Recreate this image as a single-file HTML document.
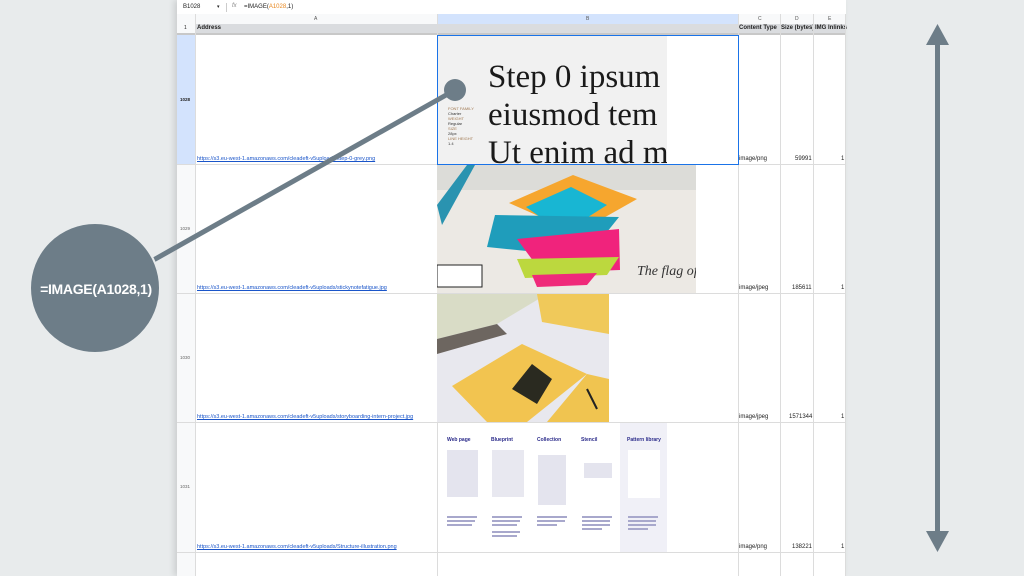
<!DOCTYPE html>
<html><head><meta charset="utf-8"><style>
*{margin:0;padding:0;box-sizing:border-box}
body{width:1024px;height:576px;overflow:hidden;background:#e8ebec;font-family:"Liberation Sans",sans-serif;position:relative}
.a{position:absolute}
.sheet{left:177px;top:0;width:669px;height:576px;background:#fff;box-shadow:-3px 0 6px rgba(0,0,0,.12)}
.t{font-size:6px;color:#222;white-space:nowrap}
.lnk{font-size:5.5px;color:#1a55c9;text-decoration:underline;white-space:nowrap}
.hl{background:#dadcdf}
.v{width:1px;background:#dcdcdc}
.h{height:1px;background:#dcdcdc}
.txt{height:2px;background:#a8a8cc}
</style></head><body>
<div class="a sheet"></div>
<div class="a t" style="left:183px;top:4px;font-size:6px">B1028</div>
<div class="a t" style="left:217px;top:4px;font-size:5px">▾</div>
<div class="a" style="left:226px;top:3px;width:1px;height:9px;background:#ccc"></div>
<div class="a t" style="left:232px;top:3px;font-size:6px;color:#888;font-style:italic">fx</div>
<div class="a t" style="left:244px;top:4px;font-size:6px">=IMAGE(<span style="color:#e8871e">A1028</span>,1)</div>
<div class="a h" style="left:177px;top:14px;width:669px"></div>
<div class="a" style="left:177px;top:14px;width:669px;height:10px;background:#f8f9fa"></div>
<div class="a" style="left:437px;top:14px;width:301px;height:10px;background:#d3e3fd"></div>
<div class="a t" style="left:314px;top:16px;font-size:5px;color:#555">A</div>
<div class="a t" style="left:586px;top:16px;font-size:5px;color:#555">B</div>
<div class="a t" style="left:758px;top:16px;font-size:5px;color:#555">C</div>
<div class="a t" style="left:795px;top:16px;font-size:5px;color:#555">D</div>
<div class="a t" style="left:828px;top:16px;font-size:5px;color:#555">E</div>
<div class="a hl" style="left:195px;top:24px;width:651px;height:9px"></div>
<div class="a" style="left:177px;top:24px;width:18px;height:9px;background:#f8f9fa"></div>
<div class="a t" style="left:184px;top:25px;font-size:5px">1</div>
<div class="a t" style="left:197px;top:25px;font-weight:bold">Address</div>
<div class="a t" style="left:739px;top:25px;font-weight:bold">Content Type</div>
<div class="a t" style="left:781px;top:25px;font-weight:bold">Size (bytes)</div>
<div class="a t" style="left:815px;top:25px;font-weight:bold">IMG Inlinks</div>
<div class="a" style="left:177px;top:33px;width:669px;height:2px;background:#c8c8c8"></div>
<div class="a" style="left:177px;top:35px;width:18px;height:541px;background:#f8f9fa"></div>
<div class="a" style="left:177px;top:35px;width:18px;height:129px;background:#d3e3fd"></div>
<div class="a t" style="left:180px;top:97px;font-size:4.5px;font-weight:bold">1028</div>
<div class="a t" style="left:180px;top:226px;font-size:4.5px;color:#666">1029</div>
<div class="a t" style="left:180px;top:355px;font-size:4.5px;color:#666">1030</div>
<div class="a t" style="left:180px;top:484px;font-size:4.5px;color:#666">1031</div>
<div class="a v" style="left:195px;top:14px;height:562px"></div>
<div class="a v" style="left:437px;top:14px;height:562px"></div>
<div class="a v" style="left:738px;top:14px;height:562px"></div>
<div class="a v" style="left:780px;top:14px;height:562px"></div>
<div class="a v" style="left:813px;top:14px;height:562px"></div>
<div class="a v" style="left:845px;top:14px;height:562px"></div>
<div class="a h" style="left:177px;top:164px;width:669px"></div>
<div class="a h" style="left:177px;top:293px;width:669px"></div>
<div class="a h" style="left:177px;top:422px;width:669px"></div>
<div class="a h" style="left:177px;top:552px;width:669px"></div>
<div class="a lnk" style="left:197px;top:156px">https://s3.eu-west-1.amazonaws.com/cleadeft-v5uploads/step-0-grey.png</div>
<div class="a lnk" style="left:197px;top:285px">https://s3.eu-west-1.amazonaws.com/cleadeft-v5uploads/stickynotefatigue.jpg</div>
<div class="a lnk" style="left:197px;top:414px">https://s3.eu-west-1.amazonaws.com/cleadeft-v5uploads/storyboarding-intern-project.jpg</div>
<div class="a lnk" style="left:197px;top:544px">https://s3.eu-west-1.amazonaws.com/cleadeft-v5uploads/Structure-illustration.png</div>
<div class="a t" style="left:739px;top:156px">image/png</div><div class="a t" style="left:795px;top:156px">59991</div><div class="a t" style="left:841px;top:156px">1</div>
<div class="a t" style="left:739px;top:285px">image/jpeg</div><div class="a t" style="left:792px;top:285px">185611</div><div class="a t" style="left:841px;top:285px">1</div>
<div class="a t" style="left:739px;top:414px">image/jpeg</div><div class="a t" style="left:789px;top:414px">1571344</div><div class="a t" style="left:841px;top:414px">1</div>
<div class="a t" style="left:739px;top:544px">image/png</div><div class="a t" style="left:792px;top:544px">138221</div><div class="a t" style="left:841px;top:544px">1</div>
<div class="a" style="left:438px;top:36px;width:229px;height:128px;background:#f1f1f1;overflow:hidden">
<div class="a" style="left:50px;top:22px;font-family:'Liberation Serif',serif;font-size:33px;line-height:38px;color:#1a1a1a;white-space:nowrap">Step 0 ipsum<br>eiusmod tem<br>Ut enim ad m</div>
<div class="a" style="left:10px;top:70px;font-size:4px;line-height:5px;color:#333">
<span style="color:#a07850">FONT FAMILY</span><br>Charter<br><span style="color:#a07850">WEIGHT</span><br>Regular<br><span style="color:#a07850">SIZE</span><br>28px<br><span style="color:#a07850">LINE HEIGHT</span><br>1.4</div>
</div>
<div class="a" style="left:437px;top:35px;width:302px;height:130px;border:1px solid #1a73e8"></div>
<svg class="a" style="left:437px;top:165px" width="259" height="128" viewBox="0 0 259 128">
<rect width="259" height="128" fill="#ece9e4"/>
<rect x="0" y="0" width="259" height="25" fill="#dcdcd8"/>
<path d="M0 40 L30 0 L38 0 L5 60Z" fill="#2a93b0"/>
<path d="M72 38 L136 10 L200 34 L140 68Z" fill="#f6a62e"/>
<path d="M89 42 L134 22 L170 40 L126 68Z" fill="#18b6d3"/>
<path d="M58 50 L182 52 L150 92 L50 82Z" fill="#1f9dbb"/>
<path d="M80 74 L182 64 L183 105 L105 108Z" fill="#f0237c"/>
<path d="M80 94 L182 92 L170 110 L88 113Z" fill="#bcd83e"/>
<path d="M95 110 L160 108 L150 120 L100 122Z" fill="#ef2a7a"/>
<rect x="0" y="100" width="45" height="22" fill="#fff" stroke="#222"/>
<text x="200" y="110" font-size="14" font-family="Liberation Serif" fill="#333" font-style="italic">The flag of</text>
</svg>
<svg class="a" style="left:437px;top:294px" width="172" height="128" viewBox="0 0 172 128">
<rect width="172" height="128" fill="#e8e8ee"/>
<path d="M0 0 H110 L60 30 L0 45Z" fill="#d9dcc6"/>
<path d="M0 45 L60 30 L70 40 L0 60Z" fill="#6d6660"/>
<path d="M100 0 H172 V40 L105 28Z" fill="#f0c95a"/>
<path d="M15 92 L85 50 L150 80 L90 128 L50 128Z" fill="#f2c450"/>
<path d="M110 128 L150 80 L172 85 L172 128Z" fill="#f0c450"/>
<path d="M75 95 L95 70 L115 85 L100 110Z" fill="#2a2a20"/>
<path d="M150 95 L160 115" stroke="#222" stroke-width="2"/>
</svg>
<div class="a" style="left:438px;top:423px;width:229px;height:129px;background:#fff">
<div class="a" style="left:182px;top:0;width:47px;height:129px;background:#f0f0f7"></div>
<div class="a t" style="left:9px;top:14px;font-size:5px;color:#2b2b8a;font-weight:bold">Web page</div>
<div class="a t" style="left:53px;top:14px;font-size:5px;color:#2b2b8a;font-weight:bold">Blueprint</div>
<div class="a t" style="left:99px;top:14px;font-size:5px;color:#2b2b8a;font-weight:bold">Collection</div>
<div class="a t" style="left:143px;top:14px;font-size:5px;color:#2b2b8a;font-weight:bold">Stencil</div>
<div class="a t" style="left:189px;top:14px;font-size:5px;color:#2b2b8a;font-weight:bold">Pattern library</div>
<div class="a" style="left:9px;top:27px;width:31px;height:47px;background:#e4e4ee"></div>
<div class="a" style="left:54px;top:27px;width:32px;height:47px;background:#e8e8f0"></div>
<div class="a" style="left:100px;top:32px;width:28px;height:50px;background:#e4e4ee"></div>
<div class="a" style="left:146px;top:40px;width:28px;height:15px;background:#e4e4ee"></div>
<div class="a" style="left:190px;top:27px;width:32px;height:48px;background:#fff"></div>
<div class="a txt" style="left:9px;top:93px;width:30px"></div><div class="a txt" style="left:9px;top:97px;width:28px"></div><div class="a txt" style="left:9px;top:101px;width:25px"></div>
<div class="a txt" style="left:54px;top:93px;width:30px"></div><div class="a txt" style="left:54px;top:97px;width:28px"></div><div class="a txt" style="left:54px;top:101px;width:25px"></div><div class="a txt" style="left:54px;top:108px;width:28px"></div><div class="a txt" style="left:54px;top:112px;width:25px"></div>
<div class="a txt" style="left:99px;top:93px;width:30px"></div><div class="a txt" style="left:99px;top:97px;width:28px"></div><div class="a txt" style="left:99px;top:101px;width:20px"></div>
<div class="a txt" style="left:144px;top:93px;width:30px"></div><div class="a txt" style="left:144px;top:97px;width:28px"></div><div class="a txt" style="left:144px;top:101px;width:28px"></div><div class="a txt" style="left:144px;top:105px;width:20px"></div>
<div class="a txt" style="left:190px;top:93px;width:30px"></div><div class="a txt" style="left:190px;top:97px;width:28px"></div><div class="a txt" style="left:190px;top:101px;width:28px"></div><div class="a txt" style="left:190px;top:105px;width:20px"></div>
</div>
<svg class="a" style="left:0;top:0" width="1024" height="576">
<line x1="150" y1="262" x2="455" y2="90" stroke="#6d7d88" stroke-width="5"/>
<circle cx="455" cy="90" r="11" fill="#6d7d88"/>
<circle cx="95" cy="288" r="65" fill="#6d7d88" stroke="#e8ebec" stroke-width="2"/>
<text x="96" y="294" text-anchor="middle" font-family="Liberation Sans" font-weight="bold" font-size="14" letter-spacing="-0.3" fill="#fff">=IMAGE(A1028,1)</text>
<rect x="935" y="43" width="5" height="490" fill="#6d7d88"/>
<path d="M937.5 24 L949 45 L926 45Z" fill="#6d7d88"/>
<path d="M937.5 552 L949 531 L926 531Z" fill="#6d7d88"/>
</svg>
</body></html>
